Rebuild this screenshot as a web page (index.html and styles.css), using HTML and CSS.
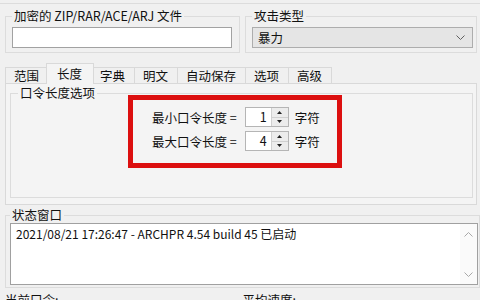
FILE: index.html
```html
<!DOCTYPE html>
<html lang="zh-CN">
<head>
  <meta charset="UTF-8">
  <title>ARCHPR</title>
  <link rel="stylesheet" href="styles.css">
</head>
<body>

<div class="topbar"></div>

<div class="top-row">
  <fieldset class="group group-file">
    <legend>加密的 ZIP/RAR/ACE/ARJ 文件</legend>
    <div class="input"></div>
  </fieldset>
  <fieldset class="group group-attack">
    <legend>攻击类型</legend>
    <div class="select">
      <span>暴力</span>
      <svg width="9" height="5" viewBox="0 0 9 5"><polyline points="0.5,0.5 4.5,4.5 8.5,0.5" fill="none" stroke="#606060" stroke-width="1"/></svg>
    </div>
  </fieldset>
</div>

<div class="tabs">
  <div class="tab">范围</div>
  <div class="tab active">长度</div>
  <div class="tab">字典</div>
  <div class="tab">明文</div>
  <div class="tab">自动保存</div>
  <div class="tab">选项</div>
  <div class="tab">高级</div>
</div>

<div class="panel">
  <fieldset class="group group-len">
    <legend>口令长度选项</legend>
    <div class="highlight">
      <div class="len-row">
        <span class="len-label">最小口令长度 =</span>
        <div class="spin">
          <span class="spin-value">1</span>
          <div class="spin-btns">
            <span class="spin-btn"><svg width="5" height="3" viewBox="0 0 5 3"><polygon points="2.5,0 5,3 0,3" fill="#222"/></svg></span>
            <span class="spin-btn"><svg width="5" height="3" viewBox="0 0 5 3"><polygon points="0,0 5,0 2.5,3" fill="#222"/></svg></span>
          </div>
        </div>
        <span>字符</span>
      </div>
      <div class="len-row">
        <span class="len-label">最大口令长度 =</span>
        <div class="spin">
          <span class="spin-value">4</span>
          <div class="spin-btns">
            <span class="spin-btn"><svg width="5" height="3" viewBox="0 0 5 3"><polygon points="2.5,0 5,3 0,3" fill="#222"/></svg></span>
            <span class="spin-btn"><svg width="5" height="3" viewBox="0 0 5 3"><polygon points="0,0 5,0 2.5,3" fill="#222"/></svg></span>
          </div>
        </div>
        <span>字符</span>
      </div>
    </div>
  </fieldset>
</div>

<fieldset class="group group-status">
  <legend>状态窗口</legend>
  <div class="log">
    <div class="log-text">2021/08/21 17:26:47 - ARCHPR 4.54 build 45 已启动</div>
    <div class="scrollbar">
      <svg width="9" height="5" viewBox="0 0 9 5"><polyline points="0.5,4.5 4.5,0.5 8.5,4.5" fill="none" stroke="#a8a8a8" stroke-width="1"/></svg>
      <svg width="9" height="5" viewBox="0 0 9 5"><polyline points="0.5,0.5 4.5,4.5 8.5,0.5" fill="none" stroke="#a8a8a8" stroke-width="1"/></svg>
    </div>
  </div>
</fieldset>

<div class="bottom-row">
  <span class="stat">当前口令:</span>
  <span class="stat">平均速度:</span>
</div>

</body>
</html>
```

FILE: styles.css
```css
body {
  margin: 0;
  background: #f0f0f0;
  color: #111;
  font-family: "Noto Sans CJK SC", "Noto Sans", sans-serif;
  font-size: 12.5px;
  overflow: hidden;
}

.topbar { height: 3px; border-bottom: 1px solid #dcdcdc; }

.group {
  margin: 0;
  min-width: 0;
  border: 1px solid #dcdcdc;
}
.group legend {
  padding: 0 2px;
  line-height: 16px;
}

.top-row { display: flex; gap: 5px; margin-top: 4px; padding-left: 5px; }
.group-file { width: 235px; box-sizing: border-box; padding: 3px 7px 4px 6px; }
.group-attack { width: 232px; box-sizing: border-box; padding: 3px 3px 4px 6px; }

.input {
  height: 21px;
  box-sizing: border-box;
  background: #fff;
  border: 1px solid #a2a2a2;
}
.select {
  height: 21px;
  box-sizing: border-box;
  background: #e5e5e5;
  border: 1px solid #adadad;
  display: flex;
  align-items: center;
  justify-content: space-between;
  padding: 0 7px 0 5px;
  line-height: 18px;
}

/* tabs */
.tabs {
  display: flex;
  align-items: flex-end;
  height: 20px;
  margin-top: 10px;
  padding-left: 6px;
}
.tab {
  height: 16px;
  line-height: 15px;
  padding: 0 9px 0 8px;
  border: 1px solid #d9d9d9;
  border-bottom: none;
  box-sizing: border-box;
  margin-left: -1px;
  background: #f0f0f0;
}
.tab.active {
  height: 21px;
  line-height: 19px;
  margin: 0 -2px -1px -3px;
  padding: 0 11px 0 10px;
  background: #f4f4f4;
  position: relative;
  z-index: 1;
}

.panel {
  margin: 0 3px 0 5px;
  border: 1px solid #d9d9d9;
  background: #f4f4f4;
  padding: 1px 3px 6px 4px;
}
.group-len { padding: 0 4px 29px 7px; }

.highlight {
  width: 214px;
  box-sizing: border-box;
  margin: -6px 0 0 110px;
  border: 5px solid #dc0f0f;
  padding: 7px 0 12px 19px;
  display: flex;
  flex-direction: column;
  gap: 4px;
}
.len-row { display: flex; align-items: center; height: 20px; }
.len-label { margin-right: 8px; }

.spin {
  display: flex;
  width: 44px;
  height: 20px;
  box-sizing: border-box;
  border: 1px solid #b5b5b5;
  background: #fff;
  margin-right: 6px;
}
.spin-value { flex: 1; text-align: right; padding-right: 4px; line-height: 18px; }
.spin-btns {
  width: 16px;
  display: flex;
  flex-direction: column;
  border-left: 1px solid #d0d0d0;
}
.spin-btn {
  flex: 1;
  display: flex;
  align-items: center;
  justify-content: center;
  background: #ececec;
}
.spin-btn + .spin-btn { border-top: 1px solid #d0d0d0; }

/* status */
.group-status { margin: 2px 0 0 5px; padding: 0 1px 2px 4px; }
.log {
  display: flex;
  height: 62px;
  box-sizing: border-box;
  border: 1px solid #a0a0a0;
  background: #fff;
}
.log-text { flex: 1; padding: 2px 5px; line-height: 16px; font-size: 12px; }
.scrollbar {
  width: 17px;
  display: flex;
  flex-direction: column;
  justify-content: space-between;
  align-items: center;
  padding: 8px 0 7px;
  background: #fafafa;
}

.bottom-row { display: flex; margin-top: 4px; padding-left: 5px; line-height: 16px; }
.stat { width: 243px; }
```
